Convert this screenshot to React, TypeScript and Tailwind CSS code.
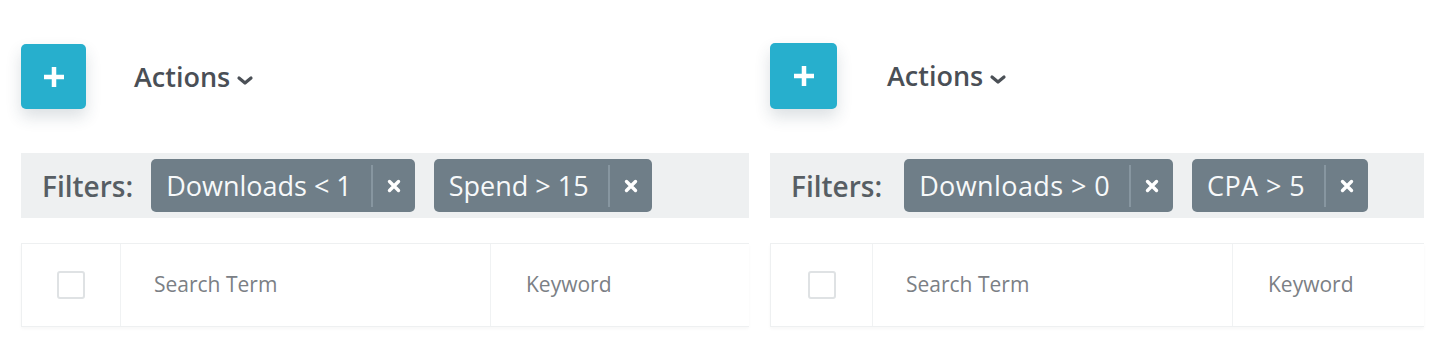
import React from "react";

function Plus({ size }: { size: string }) {
  return (
    <button
      className={`${size} flex items-center justify-center rounded-[5px] bg-[#27afcd] shadow-[0_8px_16px_rgba(40,60,80,0.16)]`}
    >
      <svg width="24" height="24" viewBox="0 0 24 24">
        <path d="M12 2v20M2 12h20" stroke="white" strokeWidth="4.5" strokeLinecap="butt" />
      </svg>
    </button>
  );
}

function Chevron() {
  return (
    <svg width="18" height="12" viewBox="0 0 18 12" className="ml-[6px] mt-[8px]">
      <path d="M3 3l6 5 6-5" stroke="#4b5056" strokeWidth="3.2" fill="none" strokeLinecap="round" strokeLinejoin="round" />
    </svg>
  );
}

function FilterChip({ label, text }: { label: string; text: string }) {
  return (
    <div className="flex h-[53px] items-center rounded-[5px] bg-[#6f7e88] text-[#f7f9fa]">
      <span className={`pl-[15px] pr-[19px] ${text} leading-none`}>{label}</span>
      <span className="h-[42px] w-[2px] bg-[#8796a0]" />
      <span className="flex w-[42px] items-center justify-center">
        <svg width="14" height="14" viewBox="0 0 14 14">
          <path d="M2.5 2.5l9 9M11.5 2.5l-9 9" stroke="white" strokeWidth="3.4" strokeLinecap="round" />
        </svg>
      </span>
    </div>
  );
}

function Panel({
  width,
  chips,
  btn,
  actionsGap,
  topPad,
  keywordCol,
  firstCol,
  chipText,
  cellText,
  filterGap,
}: {
  width: string;
  chips: string[];
  btn: string;
  actionsGap: string;
  topPad: string;
  keywordCol: string;
  firstCol: string;
  chipText: string;
  cellText: string;
  filterGap: string;
}) {
  return (
    <div className={`${width} flex flex-col`}>
      <div className={`flex h-[109px] items-center ${topPad} ${actionsGap}`}>
        <Plus size={btn} />
        <div className="flex items-center text-[27px] font-semibold leading-none text-[#4a4f56]">
          Actions
          <Chevron />
        </div>
      </div>
      <div className="mt-[44px] flex h-[65px] items-center bg-[#eef0f1] pl-[21px]">
        <span className={`${filterGap} text-[28px] font-semibold leading-none text-[#575e64]`}>Filters:</span>
        <div className="flex gap-[19px]">
          {chips.map((c) => (
            <FilterChip key={c} label={c} text={chipText} />
          ))}
        </div>
      </div>
      <div className="mt-[25px] flex h-[84px] border-y border-l border-[#eef0f1] bg-white shadow-[0_2px_3px_rgba(0,0,0,0.03)]">
        <div className={`${firstCol} flex items-center justify-center border-r border-[#f0f2f3]`}>
          <span className="h-[28px] w-[28px] rounded-[3px] border-2 border-[#dfe2e4]" />
        </div>
        <div className={`${keywordCol} flex items-center border-r border-[#f0f2f3] pl-[33px] ${cellText} text-[#7b8085]`}>
          Search Term
        </div>
        <div className={`flex items-center pl-[35px] ${cellText} text-[#7b8085]`}>Keyword</div>
      </div>
    </div>
  );
}

export default function App() {
  return (
    <div
      className="flex h-[360px] w-[1444px] gap-[21px] bg-white pl-[21px]"
      style={{ fontFamily: '"Open Sans", "Liberation Sans", sans-serif' }}
    >
      <Panel
        width="w-[728px]"
        chips={["Downloads < 1", "Spend > 15"]}
        btn="h-[65px] w-[65px]"
        actionsGap="gap-[48px]"
        topPad="pt-[44px]"
        firstCol="w-[99px]"
        keywordCol="w-[370px]"
        chipText="text-[27px]"
        cellText="text-[21px]"
        filterGap="mr-[18px]"
      />
      <Panel
        width="w-[654px]"
        chips={["Downloads > 0", "CPA > 5"]}
        btn="h-[66px] w-[67px]"
        actionsGap="gap-[50px]"
        topPad="pt-[42px]"
        firstCol="w-[102px]"
        keywordCol="w-[360px]"
        chipText="text-[27px] tracking-[0.4px]"
        cellText="text-[21px]"
        filterGap="mr-[22px]"
      />
    </div>
  );
}
